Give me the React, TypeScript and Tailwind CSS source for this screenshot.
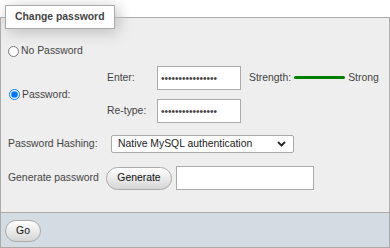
export default function App() {
  return (
    <div className="w-[390px] bg-white pt-[5px] font-['Liberation_Sans',Arial,sans-serif] text-[10.4px] text-[#444]">
      <fieldset className="border border-[#aaa] bg-[#eee] px-[4px] pt-[12px] pb-[22px]">
        <legend className="h-[24px] border border-[#aaa] bg-white px-[9px] font-bold leading-[22px] text-[#444] shadow-[3px_3px_15px_#bbb]">
          Change password
        </legend>

        <div className="flex h-[20px] items-center">
          <input type="radio" name="pw" className="ml-[3px] mr-[2px] h-[11px] w-[11px]" />
          <span>No Password</span>
        </div>

        <div className="mt-[5px] flex">
          <div className="flex w-[102px] items-center">
            <input type="radio" name="pw" defaultChecked className="ml-[4px] mr-[2px] h-[11px] w-[11px]" />
            <span>Password:</span>
          </div>
          <div className="grid grid-cols-[50px_84px_auto] items-center gap-y-[9px]">
            <span>Enter:</span>
            <input type="password" defaultValue="abcdefghijklmnop" className="h-[24px] w-[84px] border border-[#aaa] bg-white px-[3px] text-[10px] outline-none" />
            <div className="ml-[8px] flex items-center whitespace-nowrap">
              <span>Strength:</span>
              <span className="mx-[3px] h-[3px] w-[51px] rounded-full bg-[#008000]" />
              <span>Strong</span>
            </div>
            <span>Re-type:</span>
            <input type="password" defaultValue="abcdefghijklmnop" className="h-[24px] w-[84px] border border-[#aaa] bg-white px-[3px] text-[10px] outline-none" />
            <span />
          </div>
        </div>

        <div className="mt-[12px] flex h-[18px] items-center">
          <span className="w-[106px] pl-[3px]">Password Hashing:</span>
          <div className="flex h-[18px] w-[183px] items-center justify-between rounded-[2px] border border-[#aaa] bg-white pl-[6px] pr-[6px] text-[#222]">
            <span>Native MySQL authentication</span>
            <svg width="9" height="6" viewBox="0 0 9 6" className="mr-[1px]">
              <polyline points="1,1 4.5,4.5 8,1" fill="none" stroke="#222" strokeWidth="1.8" />
            </svg>
          </div>
        </div>

        <div className="mt-[13px] flex h-[24px] items-center">
          <span className="w-[101px] pl-[3px]">Generate password</span>
          <button className="h-[23px] w-[66px] rounded-full border border-[#aaa] bg-gradient-to-b from-white to-[#d6d6d6] text-[10.4px] text-[#111]">
            Generate
          </button>
          <input type="text" className="ml-[4px] h-[24px] w-[138px] border border-[#aaa] bg-white outline-none" />
        </div>
      </fieldset>

      <div className="border-x border-b border-[#aaa] bg-[#d3dce3] px-[4px] pb-[5px] pt-[7px]">
        <button className="h-[22px] w-[36px] rounded-full border border-[#aaa] bg-gradient-to-b from-white to-[#d6d6d6] text-[10.4px] text-[#111]">
          Go
        </button>
      </div>
    </div>
  );
}
